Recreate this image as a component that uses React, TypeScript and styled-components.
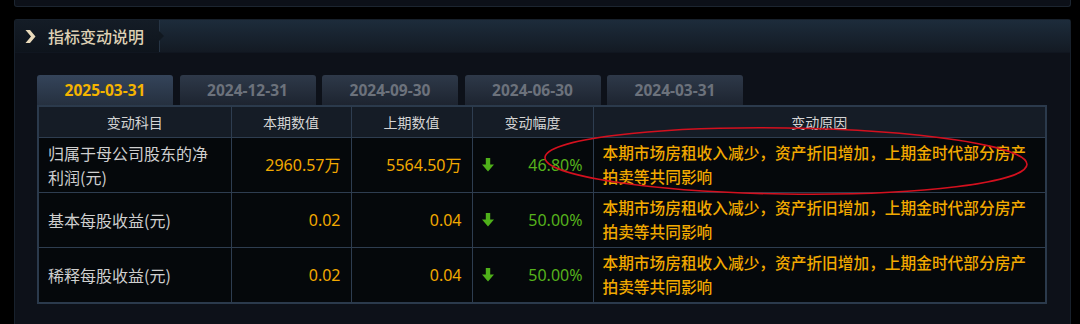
import React from 'react';
import styled, { createGlobalStyle } from 'styled-components';

const GlobalStyle = createGlobalStyle`
	html, body {
		margin: 0;
		padding: 0;
		background: #000;
	}
	body {
		font-family: "Noto Sans", "Noto Sans CJK SC", sans-serif;
	}
`;

const Page = styled.div`
	display: flex;
	flex-flow: column nowrap;
	gap: 12px;
	width: 1080px;
	height: 324px;
	padding: 0 9px 0 14px;
	box-sizing: border-box;
	overflow: hidden;
`;

const TopPanel = styled.div`
	height: 7px;
	background: #0c1018;
	border: 1px solid #1c2530;
	border-top: none;
	border-radius: 0 0 3px 3px;
	box-sizing: border-box;
`;

const Panel = styled.div`
	flex: 1;
	display: flex;
	flex-flow: column nowrap;
	background: #0d1119;
	border: 1px solid #18212c;
	border-bottom: none;
	border-radius: 3px 3px 0 0;
`;

const PanelHeader = styled.div`
	display: flex;
	flex-flow: row nowrap;
	align-items: stretch;
	height: 32px;
	background: linear-gradient(180deg, #1d2c3b 0%, #17212d 60%, #131a23 100%);
	border-bottom: 1px solid #101620;
`;

const HeaderTitle = styled.div`
	position: relative;
	display: flex;
	flex-flow: row nowrap;
	align-items: center;
	gap: 12px;
	width: 145px;
	padding-left: 10px;
	box-sizing: border-box;
	background: linear-gradient(180deg, #141c26 0%, #0e141c 100%);
	border-right: 1px solid #263444;
	color: #ddd0b4;
	font-family: "Noto Sans CJK SC", sans-serif;
	font-size: 16px;
	font-weight: 500;

	&::after {
		content: '';
		position: absolute;
		right: -5px;
		top: 11px;
		border-top: 5px solid transparent;
		border-bottom: 5px solid transparent;
		border-left: 5px solid #111820;
	}
`;

const Chevron = styled.svg`
	width: 11px;
	height: 13px;
`;

const PanelBody = styled.div`
	display: flex;
	flex-flow: column nowrap;
	padding: 22px 23px 0 22px;
`;

const Tabs = styled.div`
	display: flex;
	flex-flow: row nowrap;
	gap: 6.5px;
	height: 30px;
`;

const Tab = styled.div<{ $active?: boolean }>`
	display: flex;
	align-items: center;
	justify-content: center;
	width: 136px;
	border-radius: 3px 3px 0 0;
	background: ${p => p.$active
		? 'linear-gradient(180deg, #34445a 0%, #25303f 100%)'
		: 'linear-gradient(180deg, #2e3949 0%, #1d2430 100%)'};
	color: ${p => (p.$active ? '#f5b400' : '#6c727c')};
	font-size: 15.5px;
	font-weight: 700;
`;

const TableWrap = styled.div`
	position: relative;
`;

const Table = styled.table`
	width: 1010px;
	border-collapse: collapse;
	table-layout: fixed;
	background: #05080b;
	border: 2px solid #2b3a4c;
`;

const Th = styled.th`
	height: 30px;
	padding: 0;
	background: #151c26;
	border: 1px solid #2e3d50;
	color: #d4d4d4;
	font-family: "Noto Sans CJK SC", sans-serif;
	font-size: 14px;
	font-weight: 400;
	text-align: center;
`;

const Td = styled.td<{ $align?: 'left' | 'right' }>`
	height: 54px;
	padding: 0 10px 0 9px;
	border: 1px solid #2e3d50;
	text-align: ${p => p.$align || 'left'};
	font-size: 16px;
	line-height: 24px;
`;

const Subject = styled(Td)`
	color: #cfcfcf;
	font-family: "Noto Sans CJK SC", sans-serif;
`;

const Num = styled(Td)`
	color: #f2a900;
	font-size: 16px;
`;

const Reason = styled(Td)`
	color: #f2a900;
	font-family: "Noto Sans CJK SC", sans-serif;
	font-size: 15.7px;
	font-weight: 500;
	padding-right: 4px;
`;

const ChangeCell = styled(Td)`
	color: #55b21c;
	font-size: 16px;
`;

const ChangeInner = styled.div`
	display: flex;
	flex-flow: row nowrap;
	align-items: center;
	justify-content: space-between;
`;

const Annotation = styled.svg`
	position: absolute;
	left: 0;
	top: 0;
	width: 1010px;
	height: 200px;
	pointer-events: none;
`;

const DownArrow = () => (
	<svg width="12" height="14" viewBox="0 0 12 14">
		<path d="M3.8 0 H8.2 V6.5 H12 L6 13.5 L0 6.5 H3.8 Z" fill="#4fb01a" />
	</svg>
);

const dates = ['2025-03-31', '2024-12-31', '2024-09-30', '2024-06-30', '2024-03-31'];

const reason = '本期市场房租收入减少，资产折旧增加，上期金时代部分房产拍卖等共同影响';

const rows = [
	{ name: '归属于母公司股东的净利润(元)', cur: '2960.57万', prev: '5564.50万', pct: '46.80%' },
	{ name: '基本每股收益(元)', cur: '0.02', prev: '0.04', pct: '50.00%' },
	{ name: '稀释每股收益(元)', cur: '0.02', prev: '0.04', pct: '50.00%' },
];

export default function App() {
	return (
		<>
			<GlobalStyle />
			<Page>
				<TopPanel />
				<Panel>
					<PanelHeader>
						<HeaderTitle>
							<Chevron viewBox="0 0 11 13">
								<path d="M0.5 0 H5 L10.5 6.5 L5 13 H0.5 L6 6.5 Z" fill="#e9dabb" />
							</Chevron>
							指标变动说明
						</HeaderTitle>
					</PanelHeader>
					<PanelBody>
						<Tabs>
							{dates.map((d, i) => (
								<Tab key={d} $active={i === 0}>{d}</Tab>
							))}
						</Tabs>
						<TableWrap>
							<Table>
								<colgroup>
									<col style={{ width: 193 }} />
									<col style={{ width: 120 }} />
									<col style={{ width: 121 }} />
									<col style={{ width: 121 }} />
									<col />
								</colgroup>
								<thead>
									<tr>
										<Th>变动科目</Th>
										<Th>本期数值</Th>
										<Th>上期数值</Th>
										<Th>变动幅度</Th>
										<Th>变动原因</Th>
									</tr>
								</thead>
								<tbody>
									{rows.map(r => (
										<tr key={r.name}>
											<Subject>{r.name}</Subject>
											<Num $align="right">{r.cur}</Num>
											<Num $align="right">{r.prev}</Num>
											<ChangeCell>
												<ChangeInner>
													<DownArrow />
													<span>{r.pct}</span>
												</ChangeInner>
											</ChangeCell>
											<Reason>{reason}</Reason>
										</tr>
									))}
								</tbody>
							</Table>
							<Annotation viewBox="0 0 1010 200">
								<ellipse
									cx="749"
									cy="56"
									rx="241"
									ry="33"
									transform="rotate(0.8 749 56)"
									fill="none"
									stroke="#d4101e"
									strokeWidth="1.6"
								/>
							</Annotation>
						</TableWrap>
					</PanelBody>
				</Panel>
			</Page>
		</>
	);
}
